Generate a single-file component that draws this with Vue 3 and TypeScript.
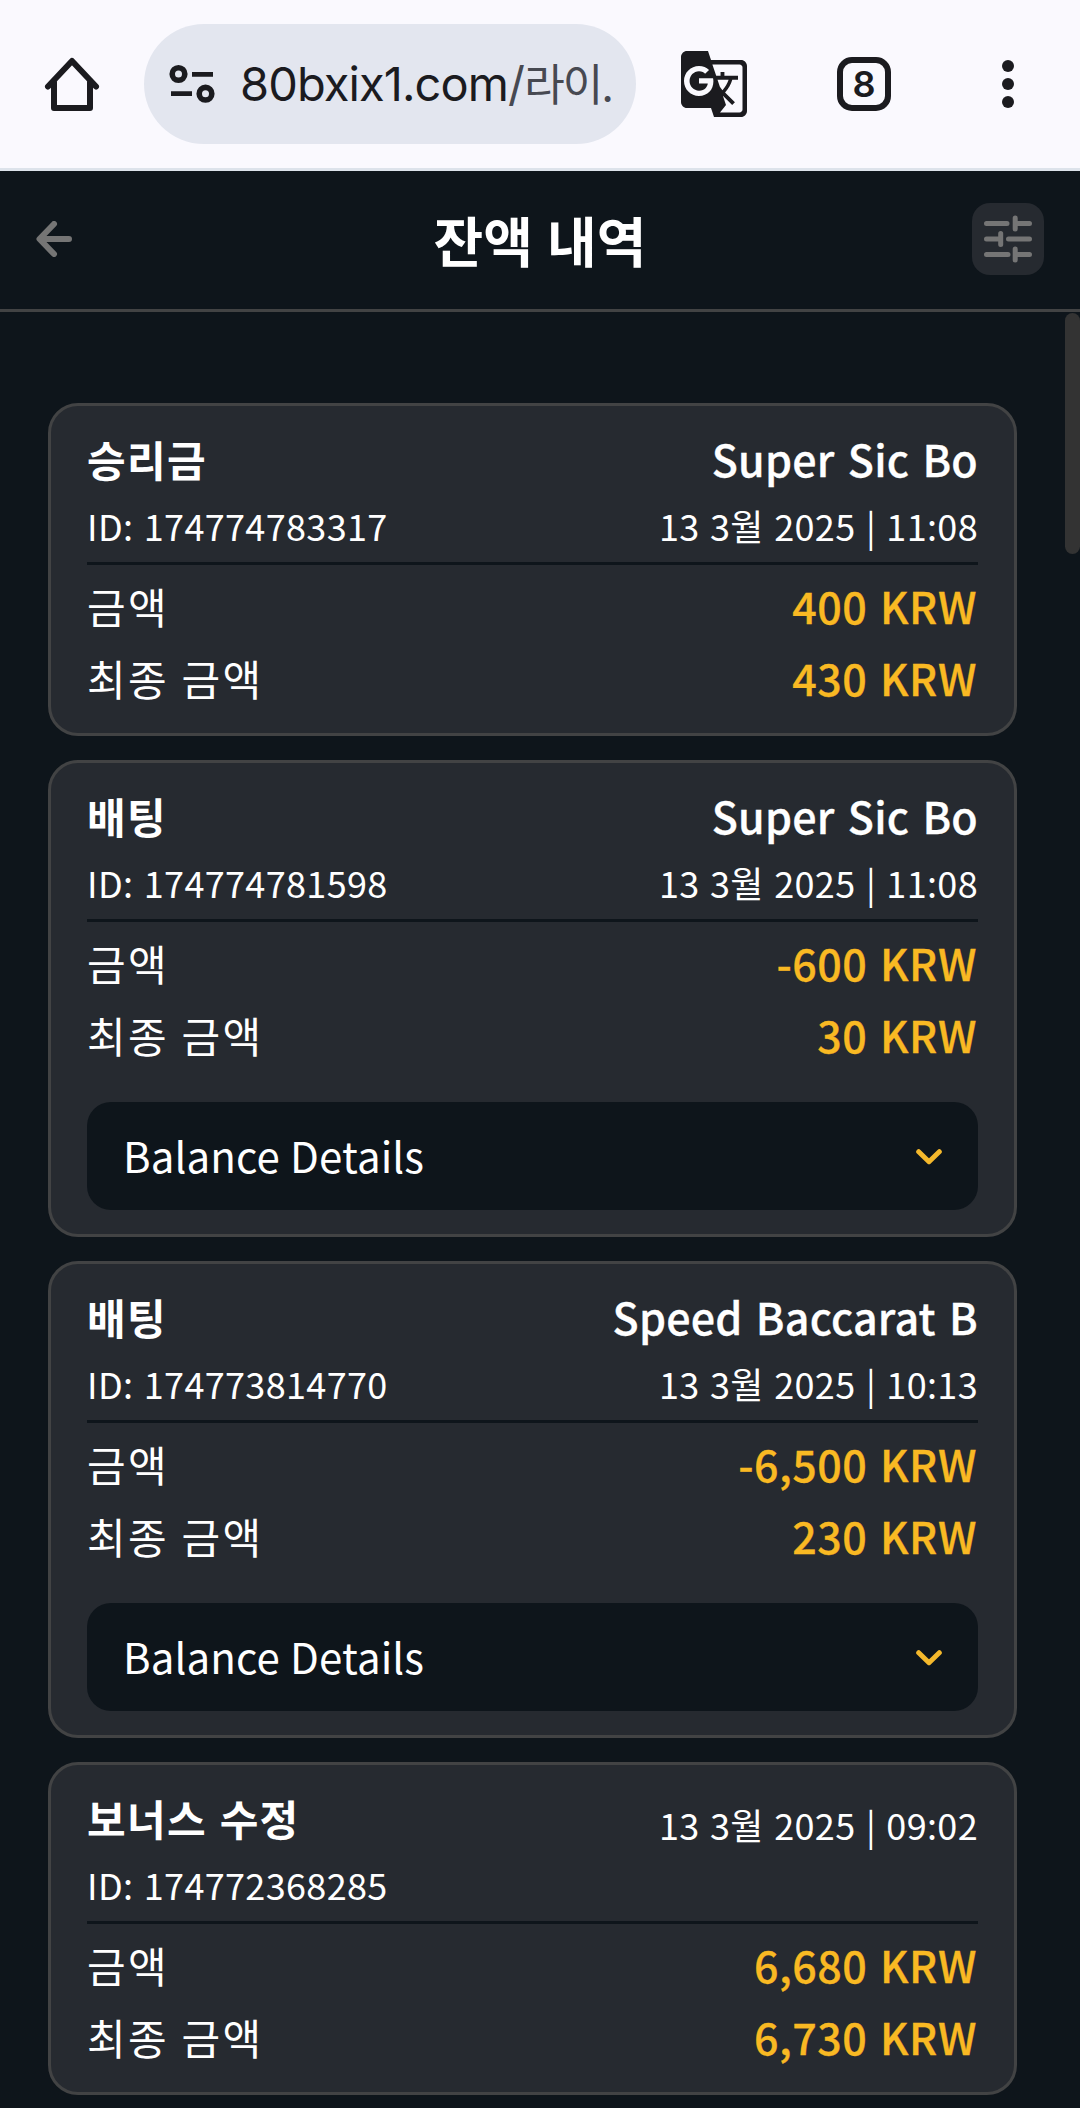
<script setup lang="ts">
interface Entry {
  kind: string
  game?: string
  id: string
  date: string
  amount: string
  total: string
  details?: boolean
}

const entries: Entry[] = [
  { kind: '승리금', game: 'Super Sic Bo', id: '174774783317', date: '13 3월 2025 | 11:08', amount: '400 KRW', total: '430 KRW' },
  { kind: '배팅', game: 'Super Sic Bo', id: '174774781598', date: '13 3월 2025 | 11:08', amount: '-600 KRW', total: '30 KRW', details: true },
  { kind: '배팅', game: 'Speed Baccarat B', id: '174773814770', date: '13 3월 2025 | 10:13', amount: '-6,500 KRW', total: '230 KRW', details: true },
  { kind: '보너스 수정', id: '174772368285', date: '13 3월 2025 | 09:02', amount: '6,680 KRW', total: '6,730 KRW' },
]
</script>

<template>
  <div class="screen">
    <div class="browser">
      <svg class="home" viewBox="0 0 72 72" fill="none" stroke="#1b1b1f" stroke-width="6" stroke-linecap="round" stroke-linejoin="round">
        <path d="M12 38.500 36 13 60 38.500M18 34V60H54V34" />
      </svg>
      <div class="address">
        <svg class="tune" viewBox="0 0 48 42" fill="none" stroke="#1b1b1f" stroke-width="5.600">
          <circle cx="10.500" cy="11" r="6.300" />
          <path d="M24 11.300H45M3 30.700H24" stroke-width="4.800" />
          <circle cx="37.500" cy="30.700" r="6.300" />
        </svg>
        <div class="url"><span class="host">80bxix1.com</span><span class="slash">/</span><span class="path">라이.</span></div>
      </div>
      <svg class="translate" viewBox="0 0 24 24" fill="#1b1b1f">
        <path d="M21 4H11l-1-3H3c-1.100 0-2 .9-2 2v15c0 1.100.9 2 2 2h8l1 3h9c1.100 0 2-.9 2-2V6c0-1.100-.9-2-2-2zM7 16c-2.760 0-5-2.240-5-5s2.240-5 5-5c1.350 0 2.480.5 3.350 1.300L9.030 8.570c-.38-.36-1.040-.78-2.030-.78-1.740 0-3.150 1.440-3.150 3.210S5.260 14.210 7 14.210c2.010 0 2.840-1.440 2.920-2.410H7v-1.710h4.680c.07.31.12.61.12 1.020C11.800 13.970 9.890 16 7 16zm6.170-5.420h3.700c-.43 1.250-1.110 2.430-2.050 3.470-.31-.35-.6-.72-.86-1.100l-.79-2.370zm8.330 9.920c0 .55-.45 1-1 1H14l2-2.500-1.040-3.100 3.100 3.100.92-.92-3.300-3.250.02-.02c1.130-1.250 1.930-2.690 2.400-4.220H20v-1.300h-4.530V8h-1.290v1.290h-1.440L11.460 5.500h9.040c.55 0 1 .45 1 1v14z" />
      </svg>
      <div class="tabs">8</div>
      <svg class="more" viewBox="0 0 12 48" fill="#1b1b1f">
        <circle cx="6" cy="6" r="6" /><circle cx="6" cy="24" r="6" /><circle cx="6" cy="42" r="6" />
      </svg>
    </div>

    <header class="header">
      <svg class="back" viewBox="0 0 36 36" fill="none" stroke="#757575" stroke-width="6" stroke-linecap="round" stroke-linejoin="round">
        <path d="M18 3 3.500 18 18 33M4 18H33" />
      </svg>
      <h1>잔액 내역</h1>
      <div class="filter">
        <svg viewBox="0 0 72 72" fill="none" stroke="#757575" stroke-width="5" stroke-linecap="round">
          <path d="M14.500 20.500H35M43.200 15V26M43.200 20.500H57.500M14.500 36H28.700M28.700 30.500V41.500M36.500 36H57.500M14.500 51.500H36M43.200 46V57M43.200 51.500H57.500" />
        </svg>
      </div>
    </header>

    <main class="list">
      <div class="thumb"></div>
      <article v-for="e in entries" :key="e.id" class="card" :class="{ open: e.details }">
        <div class="top">
          <div>
            <div class="kind">{{ e.kind }}</div>
            <div class="meta">ID: {{ e.id }}</div>
          </div>
          <div class="right">
            <div v-if="e.game" class="game">{{ e.game }}</div>
            <div class="meta">{{ e.date }}</div>
          </div>
        </div>
        <div class="row"><span class="label">금액</span><span class="money">{{ e.amount }}</span></div>
        <div class="row"><span class="label">최종 금액</span><span class="money">{{ e.total }}</span></div>
        <div v-if="e.details" class="details">
          <span>Balance Details</span>
          <svg viewBox="0 0 26 16" fill="none" stroke="#f4b82c" stroke-width="5" stroke-linecap="round" stroke-linejoin="round">
            <path d="M2.700 2.700 13 12.700 23.300 2.700" />
          </svg>
        </div>
      </article>
    </main>
  </div>
</template>

<style>
body {
  margin: 0;
  background: #0e151b;
}
</style>

<style scoped>
.screen {
  box-sizing: border-box;
  width: 1080px;
  height: 2108px;
  overflow: hidden;
  background: #0e151b;
  color: #fff;
  font-family: "Noto Sans CJK KR", sans-serif;
}
.browser {
  box-sizing: border-box;
  display: flex;
  align-items: center;
  height: 171px;
  padding-left: 36px;
  border-bottom: 3px solid #dde3eb;
  background: #faf9fe;
}
.home {
  width: 72px;
  height: 72px;
}
.address {
  box-sizing: border-box;
  display: flex;
  align-items: center;
  width: 492px;
  height: 120px;
  margin-left: 36px;
  padding-left: 24px;
  border-radius: 60px;
  background: #e3e6ef;
}
.tune {
  flex: none;
  width: 48px;
  height: 42px;
}
.url {
  display: flex;
  align-items: baseline;
  margin-left: 24px;
  white-space: nowrap;
  color: #474951;
}
.host,
.slash {
  font: 400 47px/72px Inter, sans-serif;
  letter-spacing: -0.9px;
}
.host {
  color: #1b1b1f;
}
.path {
  font-size: 44px;
  line-height: 60px;
  letter-spacing: -1.8px;
}
.translate {
  width: 72px;
  height: 72px;
  margin-left: 42px;
}
.tabs {
  box-sizing: border-box;
  width: 54px;
  height: 54px;
  margin-left: 87px;
  border: 6px solid #1b1b1f;
  border-radius: 15px;
  color: #1b1b1f;
  font: 600 36px/43px Inter, sans-serif;
  text-align: center;
}
.more {
  width: 12px;
  height: 48px;
  margin-left: 111px;
}
.header {
  box-sizing: border-box;
  display: flex;
  align-items: center;
  justify-content: space-between;
  height: 141px;
  padding: 0 36px 2px;
  border-bottom: 3px solid #424344;
}
.back {
  width: 36px;
  height: 36px;
  margin-right: 36px;
}
h1 {
  margin: 1px 0 0;
  font-size: 54px;
  font-weight: 700;
  line-height: 80px;
  word-spacing: 2px;
}
.filter {
  width: 72px;
  height: 72px;
  border-radius: 18px;
  background: #262a30;
}
.filter svg {
  display: block;
}
.list {
  position: relative;
  display: flex;
  flex-direction: column;
  gap: 24px;
  padding: 91px 63px 0 48px;
}
.thumb {
  position: absolute;
  top: 1px;
  right: 0;
  width: 15px;
  height: 241px;
  border-radius: 7.5px;
  background: #333;
}
.card {
  box-sizing: border-box;
  flex: none;
  padding: 22px 36px 19px;
  border: 3px solid #424344;
  border-radius: 30px;
  background: #262a30;
  font-size: 42px;
}
.card.open {
  padding-bottom: 24px;
}
.top {
  display: flex;
  justify-content: space-between;
  height: 134px;
  margin-bottom: 5px;
  border-bottom: 3px solid #0e151b;
}
.right {
  text-align: right;
}
.kind,
.game {
  height: 60px;
  line-height: 62px;
}
.kind {
  font-weight: 700;
  letter-spacing: 1.3px;
  word-spacing: 2px;
}
.game {
  font-size: 43px;
  font-weight: 500;
  line-height: 60px;
  letter-spacing: 0.2px;
  word-spacing: 3.4px;
  -webkit-text-stroke: 0.3px currentColor;
}
.meta {
  font-size: 36px;
  line-height: 74px;
  letter-spacing: 0.34px;
  word-spacing: 2px;
}
.row {
  display: flex;
  justify-content: space-between;
  height: 72px;
  line-height: 72px;
}
.label {
  letter-spacing: 2.3px;
  word-spacing: 1px;
}
.money {
  margin-right: 1px;
  color: #f9b923;
  font-size: 43px;
  font-weight: 500;
  line-height: 70px;
  letter-spacing: 0.5px;
  word-spacing: 2.5px;
  -webkit-text-stroke: 0.3px currentColor;
}
.details {
  box-sizing: border-box;
  display: flex;
  align-items: center;
  justify-content: space-between;
  height: 108px;
  margin-top: 31px;
  padding: 0 36px;
  border-radius: 24px;
  background: #0e151b;
}
.details span {
  margin-bottom: 3px;
  letter-spacing: 0.1px;
  word-spacing: 0.8px;
}
.details svg {
  width: 26px;
  height: 16px;
  margin-top: 1px;
}
</style>
